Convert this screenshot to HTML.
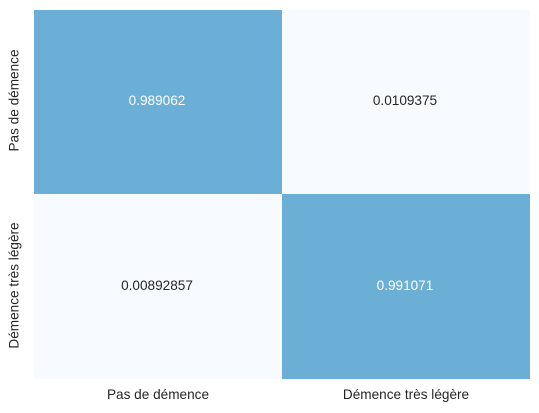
<html><body style="margin:0;width:539px;height:413px;background:#fff;position:relative;font-family:'Liberation Sans',sans-serif;font-size:13.6px;color:#262626;overflow:hidden">
<div style="position:absolute;left:34px;top:10px;width:248px;height:184px;background:#6baed6"></div>
<div style="position:absolute;left:282px;top:10px;width:248px;height:184px;background:#f7fbff"></div>
<div style="position:absolute;left:34px;top:194px;width:248px;height:185px;background:#f7fbff"></div>
<div style="position:absolute;left:282px;top:194px;width:248px;height:185px;background:#6baed6"></div>
<div style="position:absolute;left:33px;top:93px;width:248px;text-align:center;color:#fff">0.989062</div>
<div style="position:absolute;left:281px;top:93px;width:248px;text-align:center">0.0109375</div>
<div style="position:absolute;left:33px;top:278px;width:248px;text-align:center">0.00892857</div>
<div style="position:absolute;left:281px;top:278px;width:248px;text-align:center;color:#fff">0.991071</div>
<div style="position:absolute;left:34px;top:387px;width:248px;text-align:center">Pas de démence</div>
<div style="position:absolute;left:282px;top:387px;width:248px;text-align:center">Démence très légère</div>
<div style="position:absolute;left:-86px;top:93px;width:200px;text-align:center;transform:rotate(-90deg)">Pas de démence</div>
<div style="position:absolute;left:-86px;top:278px;width:200px;text-align:center;transform:rotate(-90deg)">Démence très légère</div>
</body></html>
